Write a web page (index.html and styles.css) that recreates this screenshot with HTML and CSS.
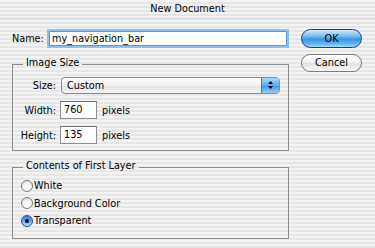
FILE: index.html
```html
<!DOCTYPE html>
<html>
<head>
<meta charset="utf-8">
<link rel="stylesheet" href="styles.css">
</head>
<body>
<div class="window">
  <div class="titlebar">New Document</div>
  <div class="content">
    <div class="main">
      <div class="name-row">
        <span class="name-label">Name:</span>
        <div class="field focus">my_navigation_bar</div>
      </div>
      <fieldset class="group size-group">
        <legend>Image Size</legend>
        <div class="grid">
          <span class="lbl">Size:</span>
          <div class="popup">
            <span class="popup-text">Custom</span>
            <span class="stepper">
              <svg width="7" height="10" viewBox="0 0 7 10"><path d="M3.5 1 L6 4 L1 4 Z M1 6 L6 6 L3.5 9 Z" fill="#000"/></svg>
            </span>
          </div>
          <span class="lbl">Width:</span>
          <div class="unit"><div class="field num">760</div><span>pixels</span></div>
          <span class="lbl">Height:</span>
          <div class="unit"><div class="field num">135</div><span>pixels</span></div>
        </div>
      </fieldset>
      <fieldset class="group layer-group">
        <legend>Contents of First Layer</legend>
        <div class="radios">
          <div class="radio-row"><span class="radio"></span><span>White</span></div>
          <div class="radio-row"><span class="radio"></span><span>Background Color</span></div>
          <div class="radio-row"><span class="radio on"></span><span>Transparent</span></div>
        </div>
      </fieldset>
    </div>
    <div class="buttons">
      <div class="btn ok">OK</div>
      <div class="btn cancel">Cancel</div>
    </div>
  </div>
</div>
</body>
</html>
```
FILE: styles.css
```css
html, body {
  margin: 0;
  padding: 0;
}
body {
  font-family: "DejaVu Sans", "Liberation Sans", sans-serif;
  font-size: 9.7px;
  color: #000;
}
.window {
  width: 375px;
  height: 248px;
  overflow: hidden;
  background: repeating-linear-gradient(to bottom, #f3f3f3 0px, #f3f3f3 2px, #e6e6e6 2px, #e6e6e6 4px);
}
.titlebar {
  height: 18px;
  line-height: 18px;
  text-align: center;
  border-bottom: 1px solid #dcdcdc;
  border-radius: 6px 6px 0 0;
}
.content {
  display: flex;
  padding-top: 10px;
}
.main {
  margin-left: 12px;
  width: 277px;
}
.name-row {
  display: flex;
  align-items: center;
  height: 19px;
}
.name-label {
  width: 35px;
}
.field {
  background: #fff;
  border: 1px solid #8d8d8d;
  border-top-color: #6d6d6d;
  box-sizing: border-box;
  line-height: 14px;
  padding-left: 3px;
}
.field.focus {
  flex: 1;
  height: 15px;
  margin: 0 2px 0 2px;
  border-color: #5e94d3;
  box-shadow: 0 0 0 2px #8fc0ee;
  padding-left: 2px;
}
.group {
  margin: 9px 0 0 0;
  padding: 0;
  border: 1px solid #8c8c8c;
  min-width: 0;
  width: 277px;
  box-sizing: border-box;
}
.group legend {
  margin-left: 10px;
  padding: 0 3px 2px 3px;
  line-height: 12px;
}
.size-group .grid {
  display: grid;
  grid-template-columns: 43px auto;
  column-gap: 4px;
  row-gap: 7px;
  grid-auto-rows: 18px;
  align-items: center;
  padding: 5px 0 6px 0;
}
.lbl {
  text-align: right;
}
.popup {
  margin-left: 1px;
  width: 219px;
  height: 17px;
  box-sizing: border-box;
  border: 1px solid #8a8a8a;
  border-radius: 4px;
  background: linear-gradient(to bottom, #ffffff 0%, #f1f1f1 50%, #e2e2e2 51%, #f4f4f4 100%);
  display: flex;
  align-items: center;
  justify-content: space-between;
  overflow: hidden;
}
.popup-text {
  padding-left: 5px;
}
.stepper {
  width: 17px;
  height: 100%;
  display: flex;
  align-items: center;
  justify-content: center;
  border-left: 1px solid #4a78b8;
  background: linear-gradient(to bottom, #a9d8fa 0%, #5aaeee 50%, #3e92e0 51%, #8fd0fb 100%);
}
.unit {
  display: flex;
  align-items: center;
  gap: 5px;
}
.field.num {
  width: 37px;
  height: 18px;
  line-height: 16px;
}
.radios {
  padding: 3px 0 8px 8px;
}
.radio-row {
  display: flex;
  align-items: center;
  height: 17.5px;
  gap: 1px;
}
.radio {
  width: 12px;
  height: 12px;
  box-sizing: border-box;
  border-radius: 50%;
  border: 1px solid #7a7a7a;
  background: radial-gradient(circle at 50% 75%, #ffffff 0%, #f4f4f4 45%, #d4d4d4 100%);
  position: relative;
}
.radio.on {
  border-color: #2a4f8f;
  background: linear-gradient(to bottom, #3b7fd4 0%, #63aef0 50%, #b9e6fd 100%);
}
.radio.on::after {
  content: "";
  position: absolute;
  left: 3px;
  top: 3px;
  width: 4px;
  height: 4px;
  border-radius: 50%;
  background: #000;
}
.buttons {
  margin-left: 12px;
  width: 61px;
  display: flex;
  flex-direction: column;
  gap: 6px;
}
.btn {
  box-sizing: border-box;
  border-radius: 10px;
  text-align: center;
}
.btn.ok {
  height: 19px;
  line-height: 17px;
  border: 1px solid #1f3d7e;
  background: linear-gradient(to bottom, #cdeafc 0%, #79bff2 35%, #3c94e3 55%, #5db5f0 80%, #9fdafc 100%);
}
.btn.cancel {
  height: 18px;
  line-height: 16px;
  border: 1px solid #7c7c7c;
  background: linear-gradient(to bottom, #ffffff 0%, #f2f2f2 45%, #e0e0e0 55%, #f7f7f7 100%);
}
```
